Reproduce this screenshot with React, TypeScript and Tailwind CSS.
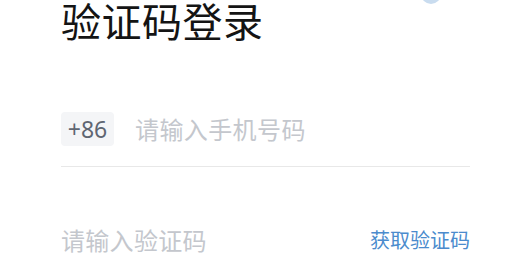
export default function App() {
  const font = { fontFamily: '"Noto Sans CJK SC", "Noto Sans", sans-serif' };
  return (
    <div className="relative w-[530px] h-[269px] overflow-hidden bg-white" style={font}>
      <div className="absolute left-[421px] top-[-16px] w-[20px] h-[20px] rounded-full bg-[#c9dcef]" />
      <div className="pl-[61px] pr-[60px]">
        <h1 className="text-[40px] leading-[40px] text-[#141414] tracking-[0.5px]">验证码登录</h1>
        <div className="mt-[72px] flex items-center h-[34px]">
          <div className="w-[53px] h-[34px] rounded-[4px] bg-[#f4f5f7] flex items-center justify-center text-[23px] text-[#5f6672]" style={{ fontFamily: '"Noto Sans", sans-serif' }}>
            +86
          </div>
          <div className="ml-[21px] text-[24px] text-[#c4c7cd] tracking-[0.4px]">请输入手机号码</div>
        </div>
        <div className="mt-[20px] h-px bg-[#e8e8e8]" />
        <div className="mt-[58px] flex items-center justify-between h-[30px]">
          <div className="text-[24px] text-[#c4c7cd] tracking-[0.3px]">请输入验证码</div>
          <div className="text-[20px] text-[#4b8bcd]">获取验证码</div>
        </div>
      </div>
    </div>
  );
}
